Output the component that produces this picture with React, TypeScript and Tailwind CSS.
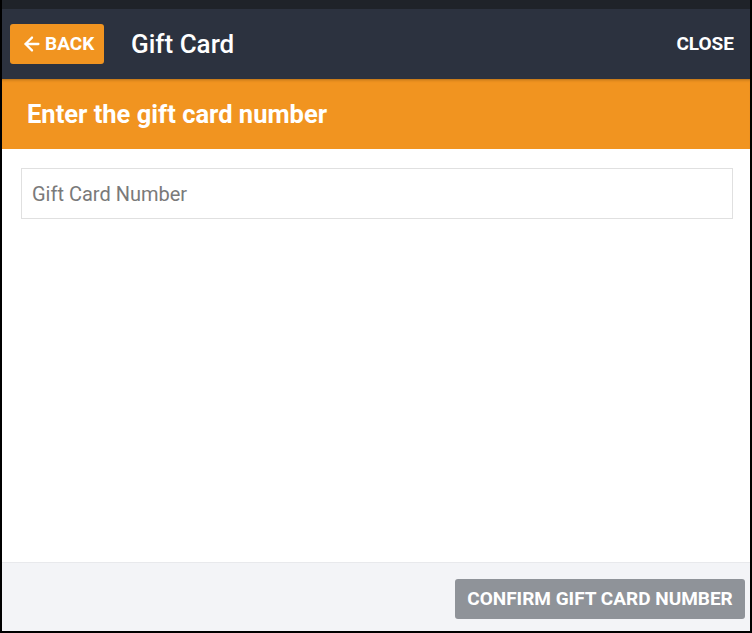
import { ArrowLeft } from "lucide-react";

export default function App() {
  return (
    <div
      className="flex h-[633px] w-[752px] flex-col border-b-2 border-l-2 border-r-2 border-black bg-[#1f2329]"
      style={{ fontFamily: "Roboto, 'Liberation Sans', sans-serif" }}
    >
      <div className="h-[9px] shrink-0 bg-[#1f2329]" />

      <header className="flex h-[70px] shrink-0 items-center bg-[#2c323f] pl-2 pr-4">
        <button className="flex h-10 w-[94px] items-center gap-[2px] rounded-[3px] bg-[#f19420] pl-[11px] text-[19px] font-bold text-white">
          <ArrowLeft className="h-[22px] w-[22px]" strokeWidth={2.5} />
          BACK
        </button>
        <h1 className="ml-[27px] text-[26px] font-medium text-white">Gift Card</h1>
        <button className="ml-auto text-[19px] font-bold text-white">CLOSE</button>
      </header>

      <div className="flex h-[70px] shrink-0 items-center bg-[#f19420] px-[25px] shadow-[inset_0_3px_3px_-2px_rgba(0,0,0,0.25)]">
        <h2 className="text-[25.5px] font-bold text-white">Enter the gift card number</h2>
      </div>

      <main className="flex-1 bg-white pl-[19px] pr-[17px] pt-[19px]">
        <input
          type="text"
          placeholder="Gift Card Number"
          className="h-[51px] w-full border border-[#e0e0e0] px-[10px] text-[20px] text-[#333] placeholder:text-[#7a7a7a] focus:outline-none"
        />
      </main>

      <footer className="flex h-[69px] shrink-0 items-start justify-end border-t border-[#e8e9ec] bg-[#f3f4f7] pr-[5px] pt-4">
        <button className="h-10 w-[290px] rounded-[3px] bg-[#8f9399] text-[19px] font-bold text-white">
          CONFIRM GIFT CARD NUMBER
        </button>
      </footer>
    </div>
  );
}
